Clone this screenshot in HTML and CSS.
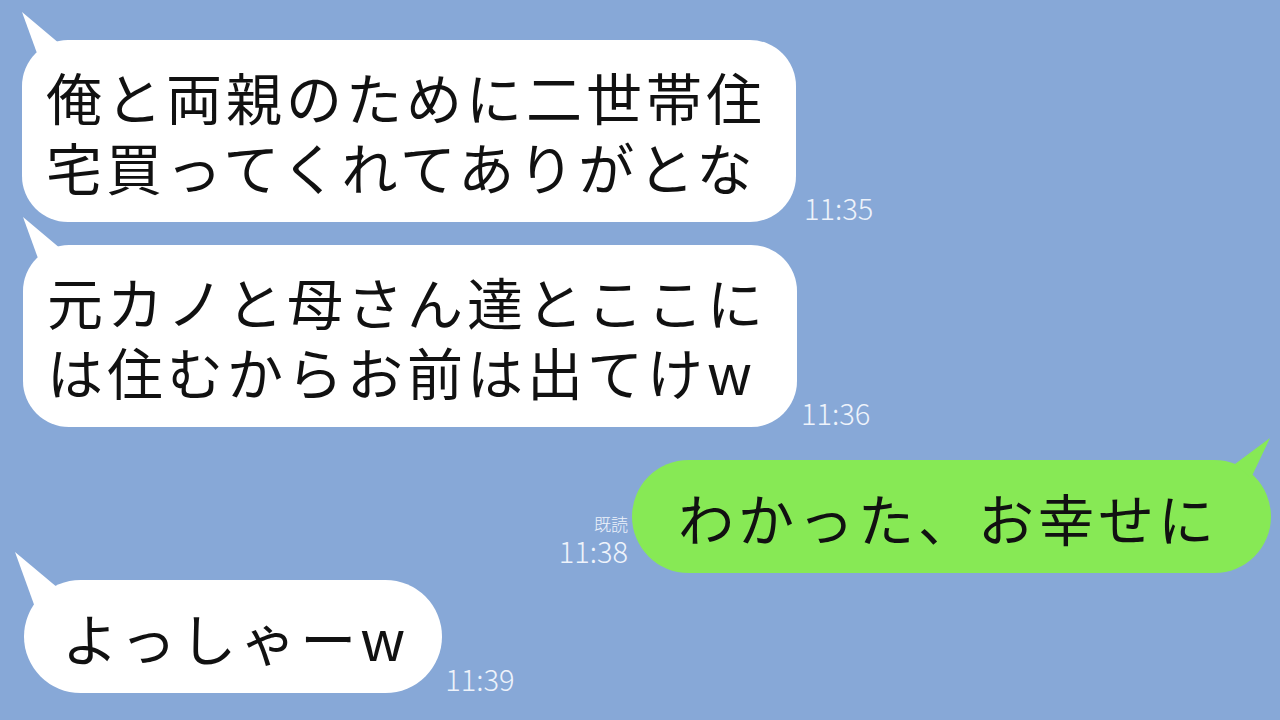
FILE: index.html
```html
<!DOCTYPE html>
<html lang="ja">
<head>
    <meta charset="UTF-8">
    <meta name="viewport" content="width=device-width, initial-scale=1.0">
    <title>トーク</title>
    <link rel="stylesheet" href="styles.css">
</head>
<body>

    <div class="chat">
        <div class="msg msg-first">
            <div class="bubble">俺と両親のために二世帯住<br>宅買ってくれてありがとな</div>
            <div class="meta"><span class="time">11:35</span></div>
        </div>

        <div class="msg msg-second">
            <div class="bubble">元カノと母さん達とここに<br>は住むからお前は出てけw</div>
            <div class="meta"><span class="time">11:36</span></div>
        </div>

        <div class="msg me">
            <div class="meta"><span class="read">既読</span><span class="time">11:38</span></div>
            <div class="bubble single">わかった、お幸せに</div>
        </div>

        <div class="msg msg-last">
            <div class="bubble single short">よっしゃーw</div>
            <div class="meta"><span class="time">11:39</span></div>
        </div>
    </div>

</body>
</html>
```

FILE: styles.css
```css
body {
    margin: 0;
    background-color: #87a8d7;
    font-family: "Noto Sans CJK JP", "Noto Sans", sans-serif;
}

.chat {
    width: 1280px;
    height: 720px;
    padding-top: 40px;
    box-sizing: border-box;
    overflow: hidden;
}

.msg {
    display: flex;
    align-items: flex-end;
    gap: 8px;
}

.msg-first {
    padding-left: 22px;
}

.msg-second {
    margin-top: 23px;
    padding-left: 23px;
    gap: 4px;
}

.msg.me {
    justify-content: flex-end;
    margin-top: 33px;
    padding-right: 9px;
    gap: 4px;
}

.msg-last {
    margin-top: 7px;
    padding-left: 24px;
    gap: 3px;
}

/* bubbles */

.bubble {
    position: relative;
    background-color: #ffffff;
    color: #111111;
    font-size: 56px;
    line-height: 70px;
    letter-spacing: 4px;
    white-space: nowrap;
    padding: 21px 30px 21px 24px;
    border-radius: 46px;
}

.bubble::before {
    content: "";
    position: absolute;
    left: 0;
    top: -28px;
    width: 40px;
    height: 48px;
    background-color: inherit;
    clip-path: polygon(0 0, 16px 44px, 38px 32px);
}

.bubble.single {
    padding-top: 22px;
    padding-bottom: 21px;
    border-radius: 60px;
}

.bubble.short {
    padding-left: 38px;
    padding-right: 33px;
}

.msg-last .bubble::before {
    left: -9px;
    width: 48px;
    height: 60px;
    clip-path: polygon(0 0, 21px 58px, 43px 36px);
}

.me .bubble {
    background-color: #87e955;
    padding-left: 46px;
    padding-right: 53px;
}

.me .bubble::before {
    left: auto;
    right: 0;
    top: -22px;
    width: 40px;
    height: 44px;
    clip-path: polygon(39px 0, 4px 26px, 20px 40px);
}

/* read / time */

.meta {
    display: flex;
    flex-direction: column;
    align-items: flex-end;
    color: #eef3fb;
    font-weight: 300;
}

.me .meta {
    margin-bottom: 8px;
}

.time {
    font-size: 29px;
    line-height: 30px;
}

.read {
    font-size: 17px;
    line-height: 22px;
}
```
